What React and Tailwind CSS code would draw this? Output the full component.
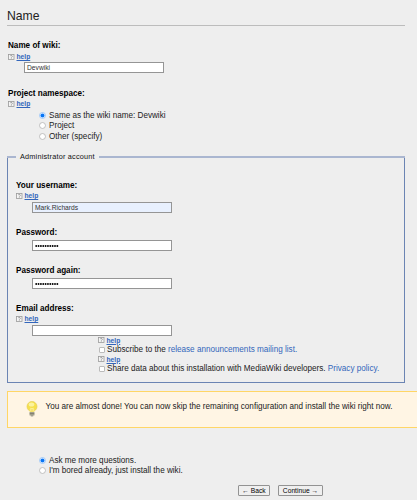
import React from 'react';

function HelpIcon() {
  return (
    <svg viewBox="0 0 7 7" className="h-[7px] w-[7px] shrink-0" fill="none">
      <rect x="0.5" y="0.5" width="5.5" height="5" fill="#f4f4f4" stroke="#999" strokeWidth="0.8" />
      <path d="M2.2 2C2.6 1.2 4.4 1.3 4.3 2.4C4.2 3.1 3.3 3 3.3 3.7M3.3 4.1V4.7" stroke="#777" strokeWidth="0.7" />
    </svg>
  );
}

function Help({ className = 'h-[10px]' }) {
  return (
    <div className={`flex items-center ${className}`}>
      <HelpIcon />
      <a className="ml-[1.5px] text-[6.7px] leading-[8px] font-bold text-[#3366bb] underline">help</a>
    </div>
  );
}

function Label({ children }) {
  return <div className="h-[11px] text-[8.15px] leading-[12px] font-bold text-black">{children}</div>;
}

function Field({ children, className = '' }) {
  return (
    <div className={`ml-4 flex h-[11px] w-[140px] items-center border border-[#959595] pl-[2px] text-[6.7px] leading-[9px] text-[#333] ${className}`}>
      {children}
    </div>
  );
}

function Dots() {
  return (
    <svg viewBox="0 0 24 4" className="h-1 w-6">
      {Array.from({ length: 10 }, (_, i) => (
        <circle key={i} cx={1.2 + i * 2.35} cy="2" r="0.95" fill="#000" />
      ))}
    </svg>
  );
}

function Radio({ checked, children }) {
  return (
    <div className="flex h-[10.5px] items-center">
      <svg viewBox="0 0 8 8" className="mr-[3px] h-[7px] w-[7px] shrink-0">
        <circle cx="4" cy="4" r="3.4" fill="#fff" stroke={checked ? '#7db6f8' : '#aaa'} strokeWidth="0.8" />
        {checked && <circle cx="4" cy="4" r="2.3" fill="#0875f5" />}
      </svg>
      <span className="pt-px">{children}</span>
    </div>
  );
}

function Check({ children }) {
  return (
    <div className="mb-px flex h-[9px] items-center">
      <span className="mr-[2px] ml-px h-[6px] w-[6px] shrink-0 rounded-[1px] border border-[#bbb] bg-white" />
      <span>{children}</span>
    </div>
  );
}

function Bulb() {
  return (
    <svg viewBox="0 0 12 16" className="-mt-[2px] h-4 w-3 shrink-0">
      <circle cx="6" cy="5.5" r="5" fill="#f6e04c" stroke="#e5ce58" strokeWidth="0.7" />
      <path d="M3 8L4.2 11.5H7.8L9 8Z" fill="#f3df63" />
      <ellipse cx="5.5" cy="3.6" rx="2.8" ry="2" fill="#fbf3a0" />
      <path d="M4.8 10.5V7L6 8L7.2 7V10.5" fill="none" stroke="#fff6b0" strokeWidth="0.7" />
      <rect x="3.5" y="11" width="5" height="3.6" rx="0.6" fill="#a3a18e" />
      <path d="M3.8 12.6H8.2M4.8 14.9H7.2" stroke="#77766a" strokeWidth="0.8" />
    </svg>
  );
}

function Button({ children, className }) {
  return (
    <button className={`flex h-[11px] items-center justify-center rounded-[1px] border border-[#939393] bg-[#efefef] text-[6.7px] leading-[9px] whitespace-pre text-black ${className}`}>
      {children}
    </button>
  );
}

export default function App() {
  return (
    <main className="flex h-[500px] w-[417px] flex-col overflow-hidden bg-[#eeeeee] pl-[7px] font-['Liberation_Sans',Arial,sans-serif] text-[8.15px] leading-[10px] whitespace-nowrap text-[#222]">
      <h1 className="h-[26px] w-[398px] shrink-0 border-b border-[#bcbcbc] pt-[8px] text-[12.2px] leading-[16px]">Name</h1>

      <section className="mt-[14px] h-[48px] shrink-0 pl-px">
        <Label>Name of wiki:</Label>
        <Help className="mt-px h-[10px]" />
        <Field className="bg-white">Devwiki</Field>
      </section>

      <section className="h-[68px] shrink-0 pl-px">
        <Label>Project namespace:</Label>
        <Help />
        <div className="mt-px pl-[31px]">
          <Radio checked>Same as the wiki name: Devwiki</Radio>
          <Radio>Project</Radio>
          <Radio>Other (specify)</Radio>
        </div>
      </section>

      <section className="h-[227px] w-[398px] shrink-0 border-x border-b border-[#6b84b3]">
        <div className="-mx-px flex h-[2px] items-center">
          <span className="h-[2px] w-[9px] bg-[#aab6d0]" />
          <h2 className="mr-[4px] ml-[4px] text-[7.3px] leading-[10px] font-normal tracking-[0.2px] text-[#111]">Administrator account</h2>
          <span className="h-[2px] grow bg-[#aab6d0]" />
        </div>
        <div className="flex flex-col pt-[22px] pl-2">
          <div className="h-[47px]">
            <Label>Your username:</Label>
            <Help />
            <Field className="mt-px bg-[#e8f0fe]">Mark.Richards</Field>
          </div>
          <div className="h-[38px]">
            <Label>Password:</Label>
            <Field className="mt-[2px] bg-white"><Dots /></Field>
          </div>
          <div className="h-[38px]">
            <Label>Password again:</Label>
            <Field className="mt-[2px] bg-white"><Dots /></Field>
          </div>
          <div className="h-[33px]">
            <Label>Email address:</Label>
            <Help />
            <Field className="mt-px bg-white" />
          </div>
          <div className="pl-[82px]">
            <Help className="h-[9px]" />
            <Check>Subscribe to the <a className="text-[#3366bb]">release announcements mailing list.</a></Check>
            <Help className="h-[9px]" />
            <Check>Share data about this installation with MediaWiki developers. <a className="text-[#3366bb]">Privacy policy.</a></Check>
          </div>
        </div>
      </section>

      <section className="mt-[8px] flex h-[37px] shrink-0 items-center border-y border-l border-[#ffd666] bg-[#fff5e4] pl-[18px]">
        <Bulb />
        <span className="-mt-[5px] ml-[7.5px]">You are almost done! You can now skip the remaining configuration and install the wiki right now.</span>
      </section>

      <section className="mt-[27px] h-[30px] shrink-0 pl-[32px]">
        <Radio checked>Ask me more questions.</Radio>
        <Radio>I'm bored already, just install the wiki.</Radio>
      </section>

      <div className="flex gap-2 pl-[231px]">
        <Button className="w-[32px]">← Back</Button>
        <Button className="w-[45px]">Continue →</Button>
      </div>
    </main>
  );
}
